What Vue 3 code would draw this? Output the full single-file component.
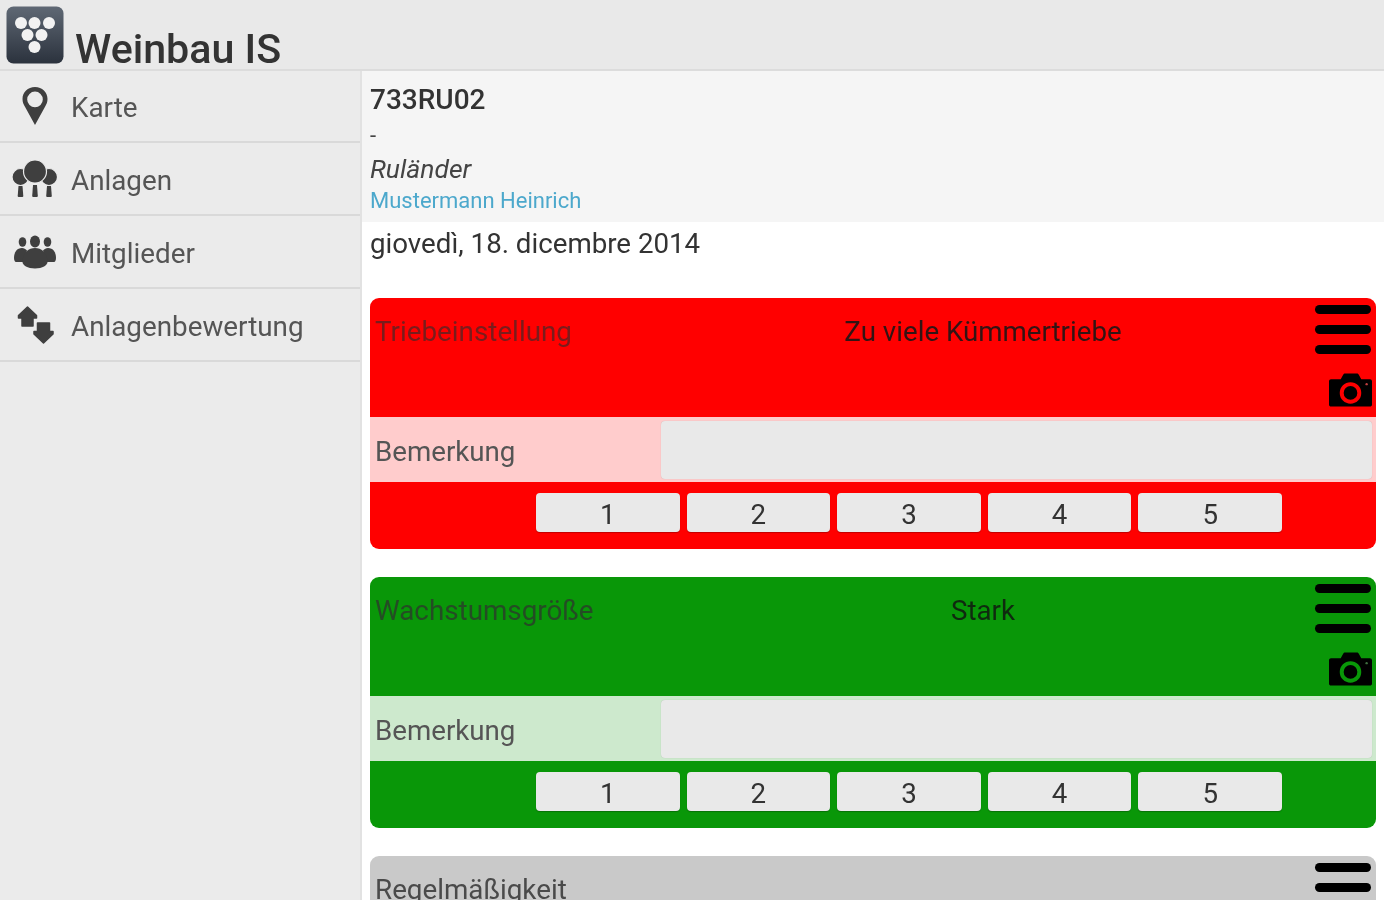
<script setup>
const navItems = [
  { label: 'Karte', icon: 'pin' },
  { label: 'Anlagen', icon: 'trees' },
  { label: 'Mitglieder', icon: 'people' },
  { label: 'Anlagenbewertung', icon: 'updown' },
]
const cards = [
  { title: 'Triebeinstellung', value: 'Zu viele Kümmertriebe', tone: 'red', full: true },
  { title: 'Wachstumsgröße', value: 'Stark', tone: 'green', full: true },
  { title: 'Regelmäßigkeit', value: '', tone: 'grey', full: false },
]
const ratings = [1, 2, 3, 4, 5]
</script>

<template>
  <div class="app">
    <header class="topbar">
      <svg class="logo" viewBox="0 0 58 58" aria-hidden="true">
        <defs>
          <linearGradient id="logoGrad" x1="0" y1="0" x2="0" y2="1">
            <stop offset="0" stop-color="#5f6874" />
            <stop offset="1" stop-color="#2b323d" />
          </linearGradient>
        </defs>
        <rect x="0.5" y="0.5" width="57" height="57" rx="7" fill="url(#logoGrad)" />
        <g fill="#f2f2f2">
          <circle cx="15" cy="17" r="6" />
          <circle cx="28.500" cy="17" r="6" />
          <circle cx="43" cy="17" r="6" />
          <circle cx="21.500" cy="29" r="6" />
          <circle cx="35.500" cy="29" r="6" />
          <circle cx="28.500" cy="41" r="6" />
        </g>
      </svg>
      <h1 class="title">Weinbau IS</h1>
    </header>
    <div class="body">
      <nav class="sidebar">
        <a v-for="item in navItems" :key="item.label" class="nav-item">
          <span class="nav-icon">
            <svg v-if="item.icon === 'pin'" width="30" height="40" viewBox="0 0 30 40">
              <path fill="#3f3f3f" fill-rule="evenodd" d="M15 1C7.800 1 2.500 6.400 2.500 13c0 3 1 5.400 2.600 8L15 39l9.900-18c1.600-2.600 2.600-5 2.600-8C27.500 6.400 22.200 1 15 1Zm0 4.600a7.800 7.800 0 1 1 0 15.600 7.800 7.800 0 0 1 0-15.600Z" />
            </svg>
            <svg v-else-if="item.icon === 'trees'" width="46" height="38" viewBox="0 0 46 38">
              <g fill="#3f3f3f" stroke="#ebebeb" stroke-width="1.200">
                <circle cx="8.500" cy="17" r="8.500" />
                <circle cx="37" cy="17" r="8.500" />
                <circle cx="23" cy="11.500" r="11.500" />
              </g>
              <g fill="#3f3f3f">
                <path d="M21 25h4l.8 11a1 1 0 0 1-1 1h-3.600a1 1 0 0 1-1-1Z" />
                <path d="M6.500 26h4l.8 10a1 1 0 0 1-1 1H6.700a1 1 0 0 1-1-1Z" />
                <path d="M35 26h4l.8 10a1 1 0 0 1-1 1h-3.600a1 1 0 0 1-1-1Z" />
              </g>
            </svg>
            <svg v-else-if="item.icon === 'people'" width="44" height="34" viewBox="0 0 44 34">
              <g fill="#3f3f3f">
                <ellipse cx="9.500" cy="7" rx="3.800" ry="4.800" />
                <ellipse cx="34.500" cy="7" rx="3.800" ry="4.800" />
                <path d="M1 23c0-6 3-10 8-10 2 0 3.500 1 5 2.500L10 27H3c-1.200 0-2-1.800-2-4Z" />
                <path d="M43 23c0-6-3-10-8-10-2 0-3.500 1-5 2.500L34 27h7c1.200 0 2-1.800 2-4Z" />
                <ellipse cx="22" cy="6.500" rx="5" ry="6" />
                <path d="M9.500 27c0-8 5-14 12.500-14s12.500 6 12.500 14c0 3-5 6.500-12.500 6.500S9.500 30 9.500 27Z" />
              </g>
            </svg>
            <svg v-else width="38" height="40" viewBox="0 0 38 40">
              <g fill="#3f3f3f" stroke="#3f3f3f" stroke-width="1.500" stroke-linejoin="round">
                <path d="M11.500 2 20.500 10.500v2.500h-3.500v8H6v-8H2.500v-2.500Z" />
                <path d="M27.500 38 18 29v-2.500h3.500V18h12v8.500H37V29Z" />
              </g>
            </svg>
          </span>
          <span class="nav-label">{{ item.label }}</span>
        </a>
      </nav>
      <main class="content">
        <section class="summary">
          <div class="code">733RU02</div>
          <div class="dash">-</div>
          <div class="variety">Ruländer</div>
          <div class="owner">Mustermann Heinrich</div>
        </section>
        <div class="date">giovedì, 18. dicembre 2014</div>
        <div class="cards">
          <article v-for="card in cards" :key="card.title" class="card" :class="card.tone">
            <div class="card-head">
              <span class="card-title">{{ card.title }}</span>
              <span class="card-value">{{ card.value }}</span>
              <div class="card-actions">
                <div class="menu"><i></i><i></i><i></i></div>
                <svg class="camera" width="43" height="34" viewBox="0 0 44 34">
                  <path fill="#000" fill-rule="evenodd" d="M12 6 14.500 1.500C15 .5 15.500 0 16.500 0h12c1 0 1.500.5 2 1.500L33 6h9c1 0 2 1 2 2v24c0 1-1 2-2 2H2c-1 0-2-1-2-2V8c0-1 1-2 2-2Zm10 3a11 11 0 1 0 0 22 11 11 0 0 0 0-22Zm0 4a7 7 0 1 1 0 14 7 7 0 0 1 0-14Z" />
                  <circle class="camera-dot" cx="38.500" cy="11" r="1.200" />
                </svg>
              </div>
            </div>
            <template v-if="card.full">
              <div class="remark">
                <label class="remark-label">Bemerkung</label>
                <div class="remark-input"></div>
              </div>
              <div class="rating">
                <button v-for="n in ratings" :key="n" class="rate-btn" type="button">{{ n }}</button>
              </div>
            </template>
          </article>
        </div>
      </main>
    </div>
  </div>
</template>

<style>
html, body { margin: 0; height: 100%; overflow: hidden; background: #fff; }
</style>

<style scoped>
.app {
  width: 1384px;
  height: 900px;
  overflow: hidden;
  display: flex;
  flex-direction: column;
  font-family: Roboto, "Liberation Sans", sans-serif;
  filter: blur(0.7px);
}
.topbar {
  flex: none;
  box-sizing: border-box;
  background: #e9e9e9;
  border-bottom: 2px solid #dcdcdc;
  height: 71px;
  padding: 6px 0 0 6px;
  display: flex;
  align-items: flex-start;
}
.logo { width: 58px; height: 58px; flex: none; }
.title {
  margin: 0 0 0 11px;
  padding-top: 20px;
  font-size: 41.200px;
  line-height: 46px;
  font-weight: 500;
  color: #333;
  white-space: nowrap;
}
.body { flex: 1; display: flex; min-height: 0; }
.sidebar {
  width: 362px;
  flex: none;
  box-sizing: border-box;
  background: #ebebeb;
  border-right: 2px solid #e2e2e2;
}
.nav-item {
  height: 73px;
  box-sizing: border-box;
  border-bottom: 2px solid #d9d9d9;
  display: flex;
  align-items: center;
  color: #555;
  font-size: 27.800px;
}
.nav-item:first-child { height: 72px; }
.nav-icon {
  width: 71px;
  flex: none;
  display: flex;
  justify-content: center;
  padding-right: 2px;
  box-sizing: border-box;
}
.nav-label { line-height: 1; padding-top: 4px; }
.content { flex: 1; min-width: 0; display: flex; flex-direction: column; }
.summary {
  height: 151px;
  flex: none;
  box-sizing: border-box;
  background: #f5f5f5;
  padding: 12px 8px 0;
}
.code { font-size: 28px; line-height: 34px; font-weight: 500; color: #333; }
.dash { font-size: 22px; line-height: 37px; color: #444; }
.variety { font-size: 26.500px; line-height: 30px; font-style: italic; color: #444; }
.owner { font-size: 22px; line-height: 34px; color: #4ca8cc; }
.date {
  height: 76px;
  flex: none;
  box-sizing: border-box;
  padding: 4px 8px 0;
  font-size: 27.700px;
  line-height: 36px;
  color: #333;
}
.cards {
  display: flex;
  flex-direction: column;
  gap: 28px;
  padding: 0 8px;
}
.card {
  height: 251px;
  flex: none;
  border-radius: 9px;
  overflow: hidden;
  display: flex;
  flex-direction: column;
}
.card.red { background: #ff0000; --tint: #ffcccc; }
.card.green { background: #099708; --tint: #cde9cd; }
.card.grey { background: #c9c9c9; --tint: #e9e9e9; }
.card-head {
  height: 119px;
  flex: none;
  display: grid;
  grid-template-columns: 220px 1fr;
  position: relative;
}
.card-title {
  padding: 16px 0 0 5px;
  font-size: 27.800px;
  line-height: 36px;
  color: #4a4a4a;
  white-space: nowrap;
}
.red .card-title { color: #7a1c1c; }
.green .card-title { color: #244c24; }
.card-value {
  padding-top: 16px;
  font-size: 27.700px;
  line-height: 36px;
  text-align: center;
  white-space: nowrap;
  color: #331414;
}
.green .card-value { color: #0f2a0f; }
.card-actions {
  position: absolute;
  top: 0;
  right: 0;
  display: flex;
  flex-direction: column;
  align-items: flex-end;
}
.menu {
  margin: 7px 5px 0 0;
  width: 56px;
  display: flex;
  flex-direction: column;
  gap: 11px;
}
.menu i {
  display: block;
  height: 9px;
  border-radius: 5px;
  background: #000;
}
.camera { margin: 19px 4px 0 0; }
.camera-dot { fill: #c04040; }
.green .camera-dot { fill: #407040; }
.remark {
  height: 65px;
  flex: none;
  box-sizing: border-box;
  background: var(--tint);
  display: flex;
  padding: 4px 4px 3px 0;
}
.remark-label {
  width: 291px;
  flex: none;
  box-sizing: border-box;
  padding-left: 5px;
  font-size: 27.700px;
  line-height: 62px;
  color: #555;
}
.remark-input {
  flex: 1;
  background: #e9e9e9;
  border-radius: 4px;
  box-shadow: 0 0 1px rgba(0, 0, 0, 0.2);
}
.rating {
  flex: 1;
  display: flex;
  gap: 7px;
  padding: 11px 0 0 166px;
  align-items: flex-start;
}
.rate-btn {
  width: 143.600px;
  height: 39px;
  padding: 4px 0 0;
  border: none;
  border-radius: 4px;
  background: #e9e9e9;
  box-shadow: 0 1px 1px rgba(0, 0, 0, 0.25);
  font-family: inherit;
  font-size: 27.700px;
  line-height: 35px;
  color: #333;
}
</style>
